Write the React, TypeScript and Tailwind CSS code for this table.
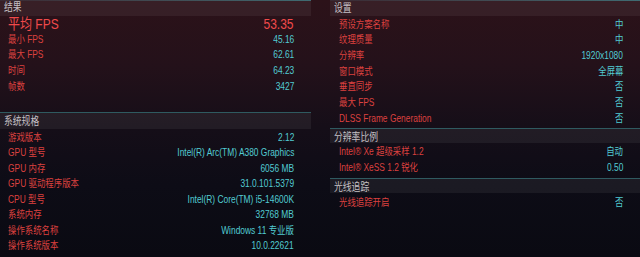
import React from "react";

const FONT = '[font-family:"Liberation_Sans","Noto_Sans_CJK_SC",sans-serif]';

type RowProps = { label: string; value: string; h: string; pl: string };

function Row({ label, value, h, pl }: RowProps) {
  return (
    <div className={`flex items-center justify-between pr-[17px] ${h} ${pl}`}>
      <span className="inline-block origin-left scale-x-80 whitespace-nowrap text-[10.5px] leading-none text-[#dc413f]">
        {label}
      </span>
      <span className="inline-block origin-right scale-x-80 whitespace-nowrap text-[10.5px] leading-none text-[#52cbd2]">
        {value}
      </span>
    </div>
  );
}

function Header({ title, cls }: { title: string; cls: string }) {
  return (
    <div className={`flex bg-white/[0.06] pl-1 ${cls}`}>
      <span className="inline-block origin-left scale-x-80 whitespace-nowrap text-[11px] leading-none text-[#c6c0c5]">
        {title}
      </span>
    </div>
  );
}

function TopLine() {
  return <div className="h-px bg-gradient-to-r from-[#3a2a33] to-[#3f6b72]" />;
}

function Line() {
  return <div className="h-px bg-[#2f5a60]" />;
}

export default function App() {
  const sys: [string, string][] = [
    ["游戏版本", "2.12"],
    ["GPU 型号", "Intel(R) Arc(TM) A380 Graphics"],
    ["GPU 内存", "6056 MB"],
    ["GPU 驱动程序版本", "31.0.101.5379"],
    ["CPU 型号", "Intel(R) Core(TM) i5-14600K"],
    ["系统内存", "32768 MB"],
    ["操作系统名称", "Windows 11 专业版"],
    ["操作系统版本", "10.0.22621"],
  ];
  const settings: [string, string][] = [
    ["预设方案名称", "中"],
    ["纹理质量", "中"],
    ["分辨率", "1920x1080"],
    ["窗口模式", "全屏幕"],
    ["垂直同步", "否"],
    ["最大 FPS", "否"],
    ["DLSS Frame Generation", "否"],
  ];
  return (
    <div
      className={`flex h-[257px] w-[640px] gap-[19px] overflow-hidden bg-[linear-gradient(180deg,#2c1219_0%,#24111a_25%,#150e18_50%,#0d0c16_72%,#0a0a12_100%)] ${FONT}`}
    >
      {/* left column */}
      <div className="flex w-[311px] flex-col">
        <div className="flex h-[112px] flex-col">
          <TopLine />
          <Header title="结果" cls="h-[15px] items-start pt-[1px]" />
          <div className="flex h-[15px] items-center justify-between pl-2 pr-[17px]">
            <span className="inline-block origin-left scale-x-80 whitespace-nowrap text-[15px] leading-none text-[#f04a4b]">
              平均 FPS
            </span>
            <span className="inline-block origin-right scale-x-80 whitespace-nowrap text-[15px] leading-none text-[#f04a4b]">
              53.35
            </span>
          </div>
          <Row label="最小 FPS" value="45.16" h="h-[15.7px]" pl="pl-2" />
          <Row label="最大 FPS" value="62.61" h="h-[15.7px]" pl="pl-2" />
          <Row label="时间" value="64.23" h="h-[15.7px]" pl="pl-2" />
          <Row label="帧数" value="3427" h="h-[15.7px]" pl="pl-2" />
        </div>
        <div className="flex flex-col">
          <Line />
          <Header title="系统规格" cls="h-4 items-center" />
          {sys.map(([l, v]) => (
            <Row key={l} label={l} value={v} h="h-[15.5px]" pl="pl-2" />
          ))}
        </div>
      </div>

      {/* right column */}
      <div className="flex w-[310px] flex-col">
        <TopLine />
        <Header title="设置" cls="h-[15px] items-center" />
        {settings.map(([l, v]) => (
          <Row key={l} label={l} value={v} h="h-[15.7px]" pl="pl-[9px]" />
        ))}
        <div className="h-[2px]" />
        <Line />
        <Header title="分辨率比例" cls="h-[14px] items-end" />
        <Row label="Intel® Xe 超级采样 1.2" value="自动" h="h-4" pl="pl-[9px]" />
        <Row label="Intel® XeSS 1.2 锐化" value="0.50" h="h-4" pl="pl-[9px]" />
        <div className="h-[3px]" />
        <Line />
        <Header title="光线追踪" cls="h-[14px] items-end" />
        <Row label="光线追踪开启" value="否" h="h-[18px]" pl="pl-[9px]" />
      </div>
    </div>
  );
}
